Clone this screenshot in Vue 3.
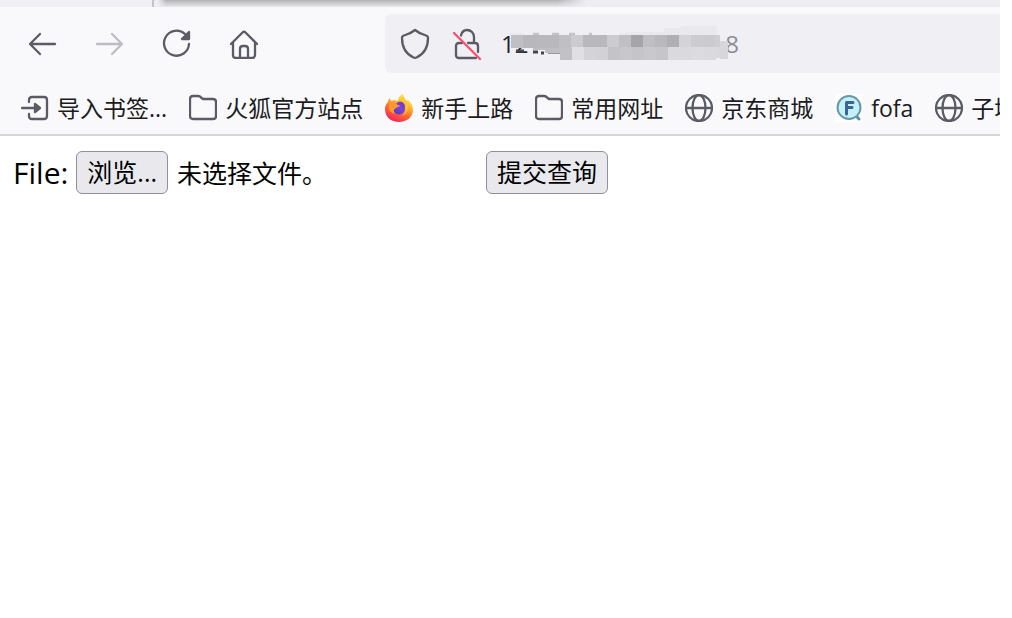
<script setup>
import { ref } from 'vue'

const address = ref('12')
const fileInput = ref(null)
const fileName = ref('未选择文件。')

const bookmarks = [
  { icon: 'import', label: '导入书签...' },
  { icon: 'folder', label: '火狐官方站点' },
  { icon: 'firefox', label: '新手上路' },
  { icon: 'folder', label: '常用网址' },
  { icon: 'globe', label: '京东商城' },
  { icon: 'fofa', label: 'fofa' },
  { icon: 'globe', label: '子域名' },
]

const upperTones = ['#c0bfc4', '#b8b7bc', '#b9b8bd', '#b9b8bd', '#c0bfc4', '#cccbd0', '#b9b8bd', '#b9b8bd', '#cccbd0', '#c0bfc4', '#a5a4a9', '#c0bfc4', '#b9b8bd', '#b0afb4', '#d4d3d8', '#cccbd0', '#cbcacf', '#cfced3']
const lowerTones = ['#c2c1c6', '#e0dfe4', '#d4d3d8', '#d2d1d6', '#c4c3c8', '#c8c7cc', '#c5c4c9', '#c9c8cd', '#c6c5ca', '#dad9de', '#dad9de', '#dcdbe0', '#dad9de', '#d9d8dd']

function chooseFile() {
  fileInput.value.click()
}
function fileChosen(event) {
  const file = event.target.files[0]
  fileName.value = file ? file.name : '未选择文件。'
}
</script>

<template>
  <div class="window">
    <header class="chrome">
      <div class="tabs">
        <div class="tab-rest"></div>
        <div class="tab-active"></div>
      </div>

      <nav class="toolbar" aria-label="导航">
        <div class="nav-buttons">
          <button type="button" aria-label="后退">
            <svg viewBox="0 0 30 30"><path d="M27 15H3M12 5 2 15l10 10" /></svg>
          </button>
          <button type="button" class="dim" aria-label="前进">
            <svg viewBox="0 0 30 30"><path d="M2 15h25M17 5l10 10-10 10" /></svg>
          </button>
          <button type="button" aria-label="刷新">
            <svg viewBox="0 0 30 30"><path d="M27 15A12.500 12.500 0 1 1 23 5" /><path class="solid" d="M27 3v7h-7z" /></svg>
          </button>
          <button type="button" aria-label="主页">
            <svg viewBox="0 0 30 30"><path d="M2 15 13.500 3.500q1.500-1.500 3 0L28 15M4 13.500V26q0 3 3 3h16q3 0 3-3V13.500M11 29V20q0-3 3-3h2q3 0 3 3v9" /></svg>
          </button>
        </div>

        <div class="address">
          <svg class="shield" viewBox="0 0 30 32" aria-hidden="true"><path d="M15 2c3 2.500 7 4.500 11 5.500q2 .5 2 2.500c0 10-4 16-11.500 19.500q-1.500.7-3 0C6 26 2 20 2 10q0-2 2-2.500C8 6.500 12 4.500 15 2z" /></svg>
          <svg class="lock" viewBox="0 0 28 32" aria-hidden="true">
            <path d="M8 7.500C9 3.500 11 2 14 2c4 0 7 3 7 7v6M15 15h7q3 0 3 3v6M9 15H6q-3 0-3 3v9q0 3 3 3h17" />
            <path class="slash" d="M1 5l26 26" />
          </svg>
          <div class="location">
            <input v-model="address" type="text" aria-label="地址" />
            <span class="port">8</span>
            <svg class="mosaic" viewBox="0 0 222 36" aria-hidden="true">
              <path d="M3 7h14v3h33v-1h62l8-3h37V2h17V0h36v10H3z" fill="#e9e8ed" />
              <path d="M26 8h6M45 8h7M62 8h6M82 8h3" stroke="#c4c3c8" />
              <path d="M9 25h8M26 26h5M34 27h3M41 26h12" stroke="#46454c" stroke-width="3" />
              <rect v-for="(tone, i) in upperTones" :key="'u' + i" :x="4 + i * 12" y="9" :width="i === 17 ? 5 : 12" height="13" :fill="tone" />
              <path d="M4 22h49v5H38v-3H26v-2z" fill="#bfbec3" />
              <rect v-for="(tone, i) in lowerTones" :key="'l' + i" :x="53 + i * 12" y="21" width="12" :height="i < 13 ? 13 : 11" :fill="tone" />
              <path d="M213 15h8v18h-8z" fill="#d7d6db" />
            </svg>
          </div>
        </div>
      </nav>

      <nav class="bookmarks" aria-label="书签">
        <a v-for="item in bookmarks" :key="item.label" href="#">
          <svg v-if="item.icon === 'import'" viewBox="0 0 28 28" aria-hidden="true">
            <path d="M8 8V6q0-3 3-3h12q3 0 3 3v16q0 3-3 3H11q-3 0-3-3v-2M1 14h17" /><path class="solid" d="m14 10 5 4-5 4z" />
          </svg>
          <svg v-else-if="item.icon === 'folder'" viewBox="0 0 28 28" aria-hidden="true">
            <path d="M1 21V5q0-3 3-3h5q2 0 3 1.500L14 5h10q3 0 3 3v14q0 3-3 3H4q-3 0-3-3z" />
          </svg>
          <svg v-else-if="item.icon === 'globe'" viewBox="0 0 28 28" aria-hidden="true">
            <circle cx="14" cy="14" r="13" /><ellipse cx="14" cy="14" rx="6.500" ry="13" /><path d="M1 14h26" />
          </svg>
          <svg v-else-if="item.icon === 'firefox'" class="colored" viewBox="0 0 28 28" aria-hidden="true">
            <defs>
              <linearGradient id="flame" x1=".8" y1="0" x2=".3" y2="1">
                <stop offset="0" stop-color="#fff44f" /><stop offset=".35" stop-color="#ffb72b" /><stop offset=".65" stop-color="#ff6533" /><stop offset="1" stop-color="#f52060" />
              </linearGradient>
              <linearGradient id="orb" x1=".8" y1="0" x2=".2" y2="1">
                <stop offset="0" stop-color="#a245e8" /><stop offset="1" stop-color="#4a3fc4" />
              </linearGradient>
            </defs>
            <path fill="url(#flame)" d="M3 8c0-2 1-3 2-4 0 1 .5 2 1 3 1.500-1 3-1 5-.5l2 .5c0-3 2-6 5-7 .5 3 2 4 3 7l2-1c3 3 5 6 5 10 0 7-6 12-14 12S0 23 0 15c0-3 1-5 3-7z" />
            <circle cx="14" cy="14.500" r="6" fill="url(#orb)" />
            <path fill="#ff962e" d="M4 8c3-1 6 0 8 2h3c1 2-2 3-4 4s-3 3-1 6c-4-1-7-4-6-8z" />
            <path fill="#ffc43a" d="M18 2c1 3 4 4 5 9 1 6-2 10-6 11 4-4 5-9 1-13z" opacity=".75" />
            <path fill="#753ad2" d="M13 8c4-1 7 1 7 5l-2 3c0-3-3-5-6-5z" />
          </svg>
          <svg v-else class="colored" viewBox="0 0 28 28" aria-hidden="true">
            <path d="M0 0h28v28H0z" fill="#fff" /><path d="m21 22 3 3" stroke="#5a8ca5" stroke-width="3" />
            <circle cx="14" cy="13.500" r="11.500" fill="#c5f0f6" stroke="#6497aa" stroke-width="2" />
            <path d="M11.500 20V8.500H18M11.500 13.500H17" fill="none" stroke="#3b6597" stroke-width="3" />
          </svg>
          <span>{{ item.label }}</span>
        </a>
      </nav>
    </header>

    <main>
      <form @submit.prevent>
        <label for="upload">File:</label>
        <input id="upload" ref="fileInput" class="native-file" type="file" tabindex="-1" @change="fileChosen" />
        <button type="button" class="action" @click="chooseFile">浏览...</button>
        <output class="file-name" for="upload">{{ fileName }}</output>
        <button type="submit" class="action">提交查询</button>
      </form>
    </main>
  </div>
</template>

<style>
body {
  margin: 0;
  background: #fff;
}
</style>

<style scoped>
.window {
  padding-right: 12px;
  color: #000;
  font-family: "Open Sans", "Noto Sans CJK SC", sans-serif;
}
.chrome {
  overflow: hidden;
  background: #f9f9fb;
  border-bottom: 2px solid #d6d6d8;
}
.tabs {
  display: flex;
  height: 7px;
  background: #eeedf2;
}
.tab-rest {
  width: 152px;
  background: #f0eff4;
  border-right: 2px solid #c4c3c8;
}
.tab-active {
  width: 428px;
  margin-left: 4px;
  background: linear-gradient(#b4b4b6, #e8e8eb);
  mask-image: linear-gradient(90deg, transparent, #000 8px, #000 400px, transparent);
}
.toolbar {
  display: flex;
  align-items: center;
  padding-top: 7px;
}
.nav-buttons {
  display: flex;
  gap: 37px;
  padding-left: 28px;
}
button {
  font-family: inherit;
}
.nav-buttons button {
  display: block;
  padding: 0;
  border: 0;
  background: none;
}
svg {
  display: block;
  flex: none;
  fill: none;
  stroke: #5b5b66;
  stroke-width: 2.3;
  stroke-linecap: round;
  stroke-linejoin: round;
}
.nav-buttons svg {
  width: 30px;
  height: 30px;
}
.dim svg {
  stroke: #bdbdc2;
}
.solid {
  fill: #5b5b66;
}
.address {
  display: flex;
  flex: 1;
  align-items: center;
  height: 59px;
  margin-left: 126px;
  padding-left: 15px;
  background: #f0eff4;
  border-radius: 6px 0 0 6px;
}
.shield {
  width: 30px;
  height: 32px;
}
.lock {
  width: 28px;
  height: 32px;
  margin-left: 23px;
}
.slash {
  stroke: #ff4f6e;
}
.location {
  position: relative;
  display: flex;
  align-items: center;
  width: 238px;
  margin-left: 20px;
  font-size: 24px;
  line-height: 32px;
}
.location input {
  flex: 1;
  min-width: 0;
  padding: 0;
  border: 0;
  outline: 0;
  background: none;
  color: #25242b;
  font: inherit;
}
.port {
  color: #8e8d94;
}
.mosaic {
  position: absolute;
  top: -2px;
  left: 6px;
  width: 222px;
  height: 36px;
  stroke: none;
  stroke-linecap: butt;
}
.bookmarks {
  display: flex;
  gap: 22px;
  padding: 19px 0 10px 21px;
  white-space: nowrap;
}
.bookmarks a {
  display: flex;
  flex: none;
  align-items: center;
  gap: 8px;
  color: #1c1b22;
  font-size: 23px;
  line-height: 32px;
  text-decoration: none;
}
.bookmarks svg {
  width: 28px;
  height: 28px;
}
.bookmarks .colored {
  stroke: none;
}
main {
  padding: 15px 13px;
}
form {
  display: flex;
  align-items: center;
}
label {
  margin-right: 8px;
  font-size: 30px;
  line-height: 40px;
}
.native-file {
  position: absolute;
  width: 1px;
  height: 1px;
  opacity: 0;
  pointer-events: none;
}
.action {
  padding: 0 10px;
  border: 1px solid #8f8f9d;
  border-radius: 6px;
  background: #e9e9ed;
  color: #000;
  font-size: 25px;
  line-height: 41px;
}
.file-name {
  width: 309px;
  margin-left: 9px;
  font-size: 25px;
  line-height: 40px;
}
</style>
